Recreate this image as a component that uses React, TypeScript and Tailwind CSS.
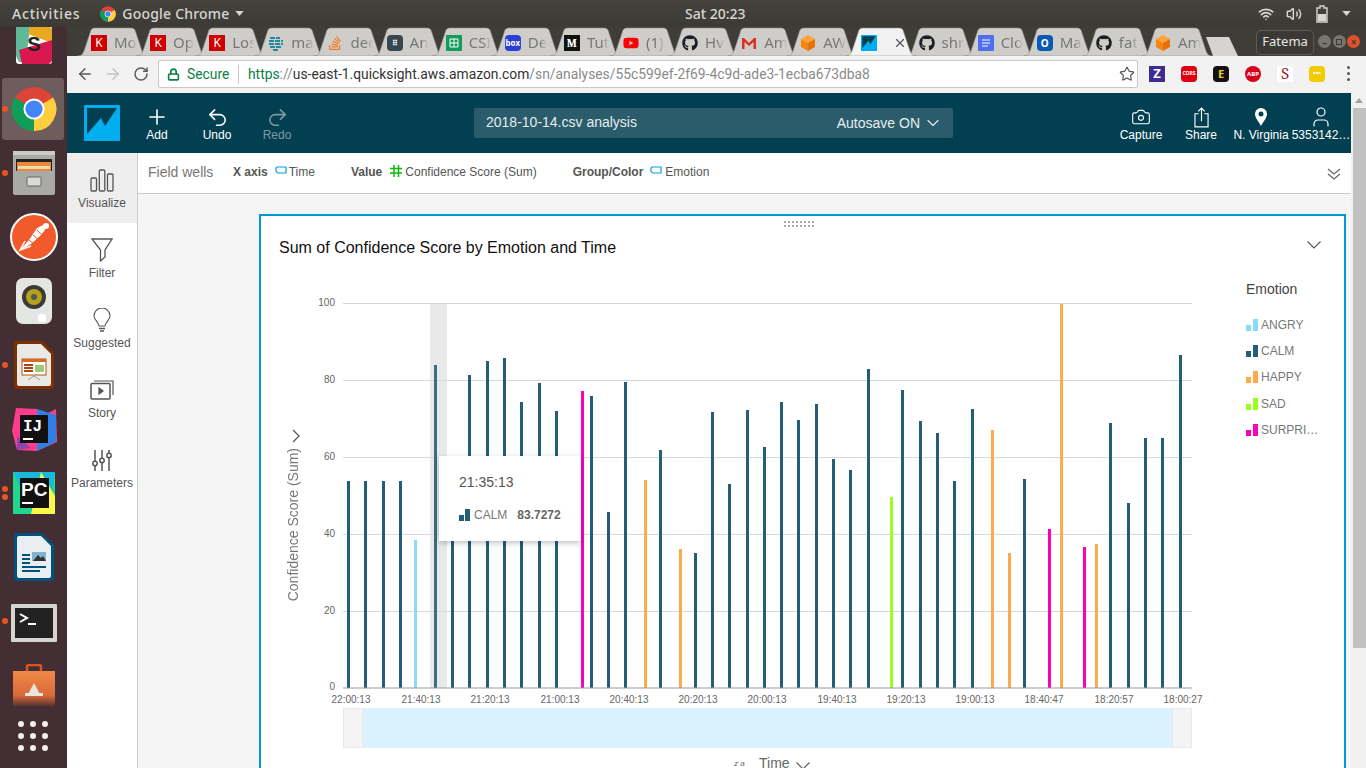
import type { ReactNode } from "react";
import { FaGithub, FaStackOverflow, FaYoutube } from "react-icons/fa";
import { ChevronDown, Wifi, Volume2, Star, Lock, ArrowLeft, ArrowRight, RotateCw, X, Plus, Undo2, Redo2, Camera, User } from "lucide-react";

const NAVY = "#235d78";
const ORANGE = "#ffa94d";
const PINK = "#ff00b4";
const LIME = "#9aff1f";
const SKY = "#8adcf5";

// [left x, top y, colour], page coordinates
const bars: [number, number, string][] = [
  [347, 481, NAVY], [364, 481, NAVY], [382, 481, NAVY], [399, 481, NAVY], [414, 540, SKY],
  [434, 365, "#3b6d84"], [451, 500, NAVY], [468, 375, NAVY], [486, 361, NAVY], [503, 358, NAVY],
  [520, 402, NAVY], [538, 383, NAVY], [555, 411, NAVY], [581, 391, PINK], [590, 396, NAVY],
  [607, 512, NAVY], [624, 382, NAVY], [644, 480, ORANGE], [659, 450, NAVY], [679, 549, ORANGE],
  [694, 553, NAVY], [711, 412, NAVY], [728, 484, NAVY], [746, 410, NAVY], [763, 447, NAVY],
  [780, 402, NAVY], [797, 420, NAVY], [815, 404, NAVY], [832, 459, NAVY], [849, 470, NAVY],
  [867, 369, NAVY], [890, 497, LIME], [901, 390, NAVY], [919, 421, NAVY], [936, 433, NAVY],
  [953, 481, NAVY], [971, 409, NAVY], [991, 430, ORANGE], [1008, 553, ORANGE], [1023, 479, NAVY],
  [1048, 529, PINK], [1060, 304, ORANGE], [1083, 547, PINK], [1095, 544, ORANGE], [1109, 423, NAVY],
  [1127, 503, NAVY], [1144, 438, NAVY], [1161, 438, NAVY], [1179, 355, NAVY],
];

const yTicks: [string, number][] = [["100", 303], ["80", 380], ["60", 457], ["40", 534], ["20", 611]];
const xLabels: [string, number][] = [
  ["22:00:13", 351], ["21:40:13", 421], ["21:20:13", 490], ["21:00:13", 560], ["20:40:13", 629],
  ["20:20:13", 698], ["20:00:13", 767], ["19:40:13", 837], ["19:20:13", 906], ["19:00:13", 975],
  ["18:40:47", 1044], ["18:20:57", 1114], ["18:00:27", 1183],
];

const legend: [string, string][] = [["ANGRY", SKY], ["CALM", NAVY], ["HAPPY", ORANGE], ["SAD", LIME], ["SURPRI…", PINK]];

function Keras() {
  return <span className="flex h-4 w-4 items-center justify-center bg-[#d00000] text-[12px] leading-none text-white">K</span>;
}

function AwsCube() {
  return (
    <svg viewBox="0 0 16 16" className="h-4 w-4">
      <path d="M8 0 15 4 8 8 1 4z" fill="#ffa23a" />
      <path d="M1 4 8 8V16L1 12z" fill="#f58510" />
      <path d="M15 4 8 8V16L15 12z" fill="#e8710a" />
    </svg>
  );
}

function QsLogo({ size }: { size: string }) {
  return (
    <svg viewBox="0 0 36 36" className={size}>
      <rect width="36" height="36" rx="1" fill="#00aeef" />
      <path d="M3 3H33L21 21 17 13 3 29z" fill="#023f50" />
    </svg>
  );
}

function Github() {
  return <FaGithub className="h-4 w-4 text-[#1b1f23]" />;
}

const tabs: [ReactNode, string][] = [
  [<Keras />, "Mo"],
  [<Keras />, "Op"],
  [<Keras />, "Los"],
  [<svg viewBox="0 0 16 16" className="h-4 w-4"><path d="M2 3h10M1 6h14M1 9h14M2 12h12M5 15h6" stroke="#1f8a9e" strokeWidth="2" strokeDasharray="5 1" /></svg>, "ma"],
  [<FaStackOverflow className="h-4 w-4 text-[#f48024]" />, "dee"],
  [<span className="flex h-4 w-4 items-center justify-center rounded-sm bg-[#37474f] text-[8px] font-bold leading-none text-white">⠿</span>, "An"],
  [<svg viewBox="0 0 16 16" className="h-4 w-4"><rect width="16" height="16" rx="1" fill="#0f9d58" /><path d="M4 4h8v8H4zM4 8h8M8 4v8" stroke="#fff" fill="none" /></svg>, "CSI"],
  [<span className="flex h-4 w-4 items-center justify-center rounded-sm bg-[#2a3fd6] text-[8px] font-bold leading-none text-white">box</span>, "De"],
  [<span className="flex h-4 w-4 items-center justify-center bg-[#111] font-serif text-[12px] font-bold leading-none text-white">M</span>, "Tut"],
  [<FaYoutube className="h-4 w-4 text-[#f00]" />, "(1)"],
  [<Github />, "Hv"],
  [<svg viewBox="0 0 16 16" className="h-4 w-4"><path d="M1 3V14H3.500V7L8 11 12.500 7V14H15V3H13L8 8 3 3z" fill="#d93025" /></svg>, "Am"],
  [<AwsCube />, "AW"],
];

const tabsAfter: [ReactNode, string][] = [
  [<Github />, "shr"],
  [<svg viewBox="0 0 16 16" className="h-4 w-4"><rect width="16" height="16" rx="1" fill="#4f6ef2" /><path d="M4 5h8M4 8h8M4 11h6" stroke="#fff" /></svg>, "Clo"],
  [<span className="flex h-4 w-4 items-center justify-center rounded-sm bg-[#0a5ab5] text-[10px] font-bold leading-none text-white">O</span>, "Ma"],
  [<Github />, "fat"],
  [<AwsCube />, "Am"],
];

function TabShape({ active }: { active?: boolean }) {
  return (
    <svg viewBox="0 0 72 29" className="absolute inset-0 h-full w-full">
      <path
        d="M0.500 29 C5 29 6 27 8 21 L13 6 C14 2 15 1 19 1 H53 C57 1 58 2 59 6 L64 21 C66 27 67 29 71.500 29z"
        fill={active ? "#f2f2f2" : "#cfcdc9"}
        stroke="#8f8d88"
        strokeWidth="0.6"
      />
    </svg>
  );
}

function Tab({ icon, label }: { icon: ReactNode; label: string }) {
  return (
    <div className="relative -mr-[12.900px] h-[29px] w-[72px] shrink-0">
      <TabShape />
      <div className="relative flex h-full items-center gap-[7px] pl-[14px] pr-[12px] pt-[2px]">
        <span className="shrink-0">{icon}</span>
        <span className="overflow-hidden whitespace-nowrap text-[15px] text-[#777] [mask-image:linear-gradient(to_right,black_65%,transparent)]">{label}</span>
      </div>
    </div>
  );
}

function TopBar() {
  return (
    <div className="flex h-[27px] shrink-0 items-center justify-between bg-gradient-to-b from-[#45433d] to-[#3c3a35] pr-[15px] pl-[12px] font-['Noto_Sans',sans-serif] text-[14px] font-medium text-[#d8d6d0]">
      <div className="flex items-center">
        <span className="tracking-[0.8px]">Activities</span>
        <svg viewBox="0 0 48 48" className="ml-[20px] h-[16px] w-[16px]">
          <circle cx="24" cy="24" r="23" fill="#db4437" />
          <path d="M24 24 44 12A23 23 0 0 1 24 47z" fill="#ffcd40" />
          <path d="M24 24 24 47A23 23 0 0 1 4 12z" fill="#0f9d58" />
          <circle cx="24" cy="24" r="10" fill="#fff" />
          <circle cx="24" cy="24" r="8" fill="#4285f4" />
        </svg>
        <span className="ml-[6px] tracking-[0.2px]">Google Chrome</span>
        <svg viewBox="0 0 10 6" className="ml-[5px] h-[5px] w-[9px]"><path d="M0 0H10L5 6z" fill="#d8d6d0" /></svg>
      </div>
      <span className="absolute left-[685px]">Sat 20:23</span>
      <div className="flex items-center">
        <Wifi size={16} strokeWidth={2.4} />
        <Volume2 size={16} strokeWidth={2.2} className="ml-[12px]" />
        <svg viewBox="0 0 12 18" className="ml-[14px] h-[18px] w-[12px]"><path d="M4 1H8V3H11V17H1V3H4z" fill="none" stroke="#d8d6d0" strokeWidth="1.400" /><rect x="2" y="9" width="8" height="7" fill="#d8d6d0" /></svg>
        <svg viewBox="0 0 10 6" className="ml-[14px] h-[5px] w-[9px]"><path d="M0 0H10L5 6z" fill="#d8d6d0" /></svg>
      </div>
    </div>
  );
}

function TabStrip() {
  return (
    <div className="flex h-[29px] shrink-0 items-center bg-[#3f3d38] pl-[10px] font-['Noto_Sans',sans-serif]">
      {tabs.map(([icon, label], i) => (
        <Tab key={i} icon={icon} label={label} />
      ))}
      <div className="relative z-10 -mr-[12.900px] h-[29px] w-[72px] shrink-0">
        <TabShape active />
        <div className="relative flex h-full items-center pl-[16px] pt-[2px]">
          <QsLogo size="h-4 w-4" />
          <X size={14} className="ml-[16px] text-[#555]" />
        </div>
      </div>
      {tabsAfter.map(([icon, label], i) => (
        <Tab key={i} icon={icon} label={label} />
      ))}
      <svg viewBox="0 0 34 20" className="ml-[5px] mt-[8px] h-[20px] w-[34px] shrink-0">
        <path d="M1 1H24L33 20H8z" fill="#d6d4d0" />
      </svg>
      <div className="ml-[17px] mt-[1px] flex h-[25px] w-[58px] shrink-0 items-center justify-center rounded-[5px] border border-[#5d5b55] bg-[#3b3935] text-[13px] text-[#e8e6e1]">Fatema</div>
      <div className="ml-[4px] flex items-center gap-[1.500px]">
        <span className="flex h-[13px] w-[13px] items-center justify-center rounded-full bg-[#77756f] text-[10px] font-bold leading-none text-[#3b3935]">–</span>
        <span className="flex h-[13px] w-[13px] items-center justify-center rounded-full bg-[#77756f]"><span className="h-[6px] w-[6px] border border-[#3b3935]" /></span>
        <span className="flex h-[13px] w-[13px] items-center justify-center rounded-full bg-[#e2502b] text-[10px] font-bold leading-none text-[#3b3935]">×</span>
      </div>
    </div>
  );
}

function ExtIcon({ children, className }: { children?: ReactNode; className: string }) {
  return <span className={`flex h-[16px] w-[16px] shrink-0 items-center justify-center font-bold leading-none ${className}`}>{children}</span>;
}

function Toolbar() {
  return (
    <div className="flex h-[37px] shrink-0 items-center bg-[#f2f2f2] pb-[2px] pl-[9px] font-['Roboto',sans-serif]">
      <ArrowLeft size={18} strokeWidth={2} className="text-[#5a5a5a]" />
      <ArrowRight size={18} strokeWidth={2} className="ml-[10px] text-[#c4c4c4]" />
      <RotateCw size={16} strokeWidth={2.2} className="ml-[11px] text-[#5a5a5a]" />
      <div className="ml-[9px] flex h-[28px] w-[980px] items-center rounded-[2px] border border-[#c8c8c8] bg-white pl-[8px] pt-[1px] text-[13.830px]">
        <Lock size={13} strokeWidth={3} className="text-[#0b8043]" />
        <span className="ml-[7px] w-[43px] whitespace-nowrap text-[#0b8043]">Secure</span>
        <span className="ml-[8px] h-[19px] w-px bg-[#c8c8c8]" />
        <span className="ml-[9px] whitespace-nowrap">
          <span className="text-[#0b8043]">https</span>
          <span className="text-[#8a8a8a]">://</span>
          <span className="text-[#333]">us-east-1.quicksight.aws.amazon.com</span>
          <span className="text-[#8a8a8a]">/sn/analyses/55c599ef-2f69-4c9d-ade3-1ecba673dba8</span>
        </span>
        <Star size={16} strokeWidth={1.8} className="ml-auto mr-[2px] text-[#5a5a5a]" />
      </div>
      <div className="ml-[11px] flex items-center gap-[16px] font-['Noto_Sans',sans-serif] text-[7px]">
        <ExtIcon className="bg-[#3d2b96] text-[13px] text-white">Z</ExtIcon>
        <ExtIcon className="rounded-sm bg-[#e00010] text-[5px] text-white">CORS</ExtIcon>
        <ExtIcon className="rounded-sm bg-[#111] text-[11px] text-[#f0d020]">E</ExtIcon>
        <ExtIcon className="rounded-full bg-[#d8001a] text-[6px] text-white">ABP</ExtIcon>
        <ExtIcon className="bg-white font-serif text-[16px] font-normal text-[#a02030]">S</ExtIcon>
        <ExtIcon className="rounded-sm bg-[#f3cb00] text-[7px] text-white">•••</ExtIcon>
        <div className="ml-[6px] flex flex-col gap-[3px]">
          <span className="h-[3px] w-[3px] rounded-full bg-[#555]" />
          <span className="h-[3px] w-[3px] rounded-full bg-[#555]" />
          <span className="h-[3px] w-[3px] rounded-full bg-[#555]" />
        </div>
      </div>
    </div>
  );
}

function DockItem({ children, dots = 0, active }: { children?: ReactNode; dots?: number; active?: boolean }) {
  return (
    <div className="relative flex h-[64px] w-[67px] shrink-0 items-center justify-center">
      {active && <div className="absolute left-[2px] top-[1px] h-[62px] w-[62px] rounded-[3px] bg-[#6f5c5c]" />}
      {dots > 0 && (
        <div className="absolute left-[2px] top-1/2 flex -translate-y-1/2 flex-col gap-[2px]">
          {Array.from({ length: dots }).map((_, i) => (
            <span key={i} className="h-[6px] w-[6px] rounded-full bg-[#e95420]" />
          ))}
        </div>
      )}
      <div className="relative">{children}</div>
    </div>
  );
}

function Dock() {
  return (
    <div className="flex w-[67px] shrink-0 flex-col overflow-hidden bg-[#432f33]">
      <div className="-mt-[14px] flex flex-col">
        <DockItem>
          <svg viewBox="0 0 36 38" className="h-[38px] w-[36px]">
            <rect width="36" height="38" rx="3" fill="#fff" />
            <path d="M0 0H14L10 36H3L0 30z" fill="#5fb89a" />
            <path d="M14 0H33L36 3V17L12 8z" fill="#e8a820" />
            <path d="M3 24 36 14V35L33 38H6z" fill="#d8184e" />
            <text x="18" y="25" textAnchor="middle" className="font-['Liberation_Sans',sans-serif] text-[20px] font-bold" fill="#222">S</text>
          </svg>
        </DockItem>
        <DockItem dots={1} active>
          <svg viewBox="0 0 48 48" className="h-[46px] w-[46px]">
            <circle cx="24" cy="24" r="23" fill="#db4437" />
            <path d="M24 24 44 12A23 23 0 0 1 24 47z" fill="#ffcd40" />
            <path d="M24 24 24 47A23 23 0 0 1 4 12z" fill="#0f9d58" />
            <circle cx="24" cy="24" r="11" fill="#fff" />
            <circle cx="24" cy="24" r="9" fill="#4285f4" />
          </svg>
        </DockItem>
        <DockItem dots={1}>
          <svg viewBox="0 0 42 44" className="h-[44px] w-[42px]">
            <rect width="42" height="44" rx="2" fill="#a9a9a6" />
            <rect x="0" y="0" width="42" height="4" fill="#c9c9c6" />
            <rect x="3" y="8" width="36" height="12" fill="#222" />
            <rect x="4" y="11" width="34" height="9" fill="#e8883a" />
            <rect x="5" y="15" width="32" height="3" fill="#f3d9a8" />
            <rect x="14" y="26" width="14" height="9" rx="1" fill="#d9d9d6" stroke="#666" />
          </svg>
        </DockItem>
        <DockItem>
          <svg viewBox="0 0 48 48" className="h-[48px] w-[48px]">
            <circle cx="24" cy="24" r="23" fill="#f15a2b" stroke="#fff" strokeWidth="2" />
            <path d="M10 37 19 27 27 15 33 12 35 17 30 23 21 31z" fill="#fff" />
            <path d="M19 27 24 31M23 22 28 26M27 17 31 21" stroke="#f15a2b" />
            <path d="M15 28 10 37 21 33" fill="none" stroke="#fff" strokeWidth="1.500" />
            <circle cx="36" cy="13" r="3" fill="#fff" />
          </svg>
        </DockItem>
        <DockItem>
          <svg viewBox="0 0 36 46" className="h-[46px] w-[36px]">
            <rect width="36" height="46" rx="7" fill="#e4e6e4" />
            <circle cx="18" cy="19" r="12" fill="#3a3a36" />
            <circle cx="18" cy="19" r="8" fill="#b6a21a" />
            <circle cx="18" cy="19" r="3" fill="#555" />
            <rect x="22" y="36" width="8" height="8" rx="2" fill="#fff" />
          </svg>
        </DockItem>
        <DockItem dots={1}>
          <svg viewBox="0 0 40 48" className="h-[48px] w-[40px]">
            <path d="M0 3Q0 0 3 0H28L40 12V45Q40 48 37 48H3Q0 48 0 45z" fill="#7f2e00" />
            <path d="M3 5Q3 3 5 3H27L37 13V43Q37 45 35 45H5Q3 45 3 43z" fill="#e9e9e6" />
            <rect x="8" y="18" width="24" height="16" fill="#fff" stroke="#b4541a" />
            <rect x="8" y="18" width="24" height="3" fill="#d96a24" />
            <path d="M10 24H19M10 27H19M10 30H19" stroke="#a8440f" strokeWidth="2" />
            <rect x="21" y="24" width="9" height="7" fill="#9acb7a" />
            <path d="M14 39 20 35 26 39" fill="none" stroke="#999" />
          </svg>
        </DockItem>
        <DockItem>
          <svg viewBox="0 0 46 46" className="h-[46px] w-[46px]">
            <path d="M5 2 26 3 33 9 45 3 46 36 26 45 6 44 1 25z" fill="#ff3d8c" />
            <path d="M26 3 45 9V36L26 45z" fill="#2f7fe6" />
            <path d="M6 30 20 42 6 44z" fill="#8e44ad" />
            <rect x="9" y="9" width="28" height="28" fill="#111" />
            <rect x="12" y="32" width="10" height="2" fill="#fff" />
            <text x="12" y="25" className="font-['Liberation_Mono',monospace] text-[16px] font-bold" fill="#fff">IJ</text>
          </svg>
        </DockItem>
        <DockItem dots={2}>
          <svg viewBox="0 0 42 42" className="h-[42px] w-[42px]">
            <rect width="42" height="42" fill="#21d789" />
            <path d="M0 0H42L38 30 42 42H20z" fill="#1bb8d8" />
            <path d="M28 0 42 24V42H18z" fill="#fcf84a" />
            <rect x="7" y="6" width="29" height="30" fill="#111" />
            <rect x="9" y="30" width="11" height="2" fill="#fff" />
            <text x="8" y="24" className="font-['Liberation_Sans',sans-serif] text-[19px] font-bold" fill="#fff">PC</text>
          </svg>
        </DockItem>
        <DockItem>
          <svg viewBox="0 0 40 48" className="h-[48px] w-[40px]">
            <path d="M0 3Q0 0 3 0H28L40 12V45Q40 48 37 48H3Q0 48 0 45z" fill="#00517e" />
            <path d="M3 5Q3 3 5 3H27L37 13V43Q37 45 35 45H5Q3 45 3 43z" fill="#e9eef0" />
            <path d="M8 22h8M8 26h8M8 30h8M8 34h24M8 38h18" stroke="#00517e" strokeWidth="2" />
            <rect x="18" y="19" width="14" height="9" fill="#7fb3cf" />
            <path d="M19 28 24 22 27 25 29 23 32 28z" fill="#333" />
          </svg>
        </DockItem>
        <DockItem dots={1}>
          <svg viewBox="0 0 46 38" className="mt-[3px] h-[38px] w-[46px]">
            <rect width="46" height="38" rx="1" fill="#d4d4d0" />
            <rect x="4" y="4" width="38" height="30" fill="#222" />
            <path d="M9 10 16 14 9 18" fill="none" stroke="#fff" strokeWidth="2" />
            <path d="M17 20H25" stroke="#fff" strokeWidth="2" />
          </svg>
        </DockItem>
        <DockItem>
          <svg viewBox="0 0 42 42" className="h-[42px] w-[42px]">
            <defs>
              <linearGradient id="bag" x1="0" y1="0" x2="0" y2="1">
                <stop offset="0" stopColor="#ee8a48" />
                <stop offset="0.7" stopColor="#d9683a" />
                <stop offset="1" stopColor="#55352f" />
              </linearGradient>
            </defs>
            <path d="M0 7H42V42H0z" fill="url(#bag)" />
            <path d="M14 7V3Q14 1 16 1H26Q28 1 28 3V7" fill="none" stroke="#d9541e" strokeWidth="2.500" />
            <path d="M21 19 28 32H14z" fill="#e9e4dc" />
            <path d="M12 29H30V32H12z" fill="#e9e4dc" />
          </svg>
        </DockItem>
        <div className="ml-[18px] mt-[4px] grid w-[30px] grid-cols-3 gap-[6px]">
          {Array.from({ length: 9 }).map((_, i) => (
            <span key={i} className="h-[6px] w-[6px] rounded-full bg-[#f2f0ee]" />
          ))}
        </div>
      </div>
    </div>
  );
}

function HeaderButton({ label, icon, dim, w }: { label: string; icon: ReactNode; dim?: boolean; w: string }) {
  return (
    <div className={`flex flex-col items-center whitespace-nowrap text-[12px] ${w} ${dim ? "text-[#7f9aa3]" : "text-white"}`}>
      <div className="flex h-[26px] items-center">{icon}</div>
      <span className="-mt-[2px] leading-[14px]">{label}</span>
    </div>
  );
}

function Header() {
  return (
    <div className="flex h-[60px] shrink-0 items-center bg-[#023f50] pl-[17px]">
      <QsLogo size="h-[36px] w-[36px] shrink-0" />
      <div className="ml-[7px] flex">
        <HeaderButton w="w-[60px]" label="Add" icon={<Plus size={24} strokeWidth={1.6} />} />
        <HeaderButton w="w-[60px]" label="Undo" icon={<Undo2 size={23} strokeWidth={1.6} />} />
        <HeaderButton w="w-[60px]" dim label="Redo" icon={<Redo2 size={23} strokeWidth={1.6} />} />
      </div>
      <div className="ml-[167px] flex h-[30px] w-[479px] items-center justify-between rounded-[2px] bg-[#2a5c6c] pl-[12px] pr-[10px] text-[14px] text-[#e6edef]">
        <span className="-mt-[2px]">2018-10-14.csv analysis</span>
        <span className="flex items-center gap-[3px]">
          Autosave ON
          <ChevronDown size={20} strokeWidth={1.3} />
        </span>
      </div>
      <div className="ml-auto flex">
        <HeaderButton w="w-[60px]" label="Capture" icon={<Camera size={20} strokeWidth={1.3} />} />
        <HeaderButton w="w-[60px]" label="Share" icon={
          <svg viewBox="0 0 16 22" className="h-[21px] w-[15px]" fill="none" stroke="#fff" strokeWidth="1.200">
            <path d="M5 7H1V21H15V7H11M8 15V1M4.500 4.500 8 1 11.500 4.500" />
          </svg>
        } />
        <HeaderButton w="w-[60px]" label="N. Virginia" icon={
          <svg viewBox="0 0 12 18" className="h-[18px] w-[12px]">
            <path fillRule="evenodd" d="M6 0A6 6 0 0 1 12 6C12 10 8 14 6 18 4 14 0 10 0 6A6 6 0 0 1 6 0zM6 3.500A2.500 2.500 0 1 0 6 8.500 2.500 2.500 0 0 0 6 3.500z" fill="#fff" />
          </svg>
        } />
        <HeaderButton w="w-[60px]" label="5353142…" icon={<User size={24} strokeWidth={1.2} />} />
      </div>
    </div>
  );
}

function SideItem({ label, icon, active }: { label: string; icon: ReactNode; active?: boolean }) {
  return (
    <div className={`flex h-[70px] flex-col items-center whitespace-nowrap pt-[14px] text-[12px] text-[#555] ${active ? "bg-[#eeeeee]" : ""}`}>
      <div className="flex h-[26px] items-center">{icon}</div>
      <span className="mt-[3px] leading-[14px]">{label}</span>
    </div>
  );
}

function SideNav() {
  return (
    <div className="w-[71px] shrink-0 border-r border-[#cccccc] bg-white">
      <SideItem active label="Visualize" icon={
        <svg viewBox="0 0 24 24" className="h-[24px] w-[24px]" fill="none" stroke="#555" strokeWidth="1.300">
          <rect x="1" y="10" width="5.500" height="13" rx="1" />
          <rect x="9.300" y="2" width="5.500" height="21" rx="1" />
          <rect x="17.500" y="6" width="5.500" height="17" rx="1" />
        </svg>
      } />
      <SideItem label="Filter" icon={
        <svg viewBox="0 0 22 24" className="h-[24px] w-[22px]" fill="none" stroke="#555" strokeWidth="1.300">
          <path d="M1 1H21L14 12V19L9.500 23V12z" />
        </svg>
      } />
      <SideItem label="Suggested" icon={
        <svg viewBox="0 0 18 24" className="h-[24px] w-[18px]" fill="none" stroke="#555" strokeWidth="1.100">
          <path d="M6 18C5 13 1 12 1 8A8 8 0 0 1 17 8C17 12 13 13 12 18z" />
          <path d="M6 20.500H12M7 23H11" strokeWidth="1.500" />
        </svg>
      } />
      <SideItem label="Story" icon={
        <svg viewBox="0 0 24 20" className="h-[20px] w-[24px]" fill="none" stroke="#555" strokeWidth="1.200">
          <rect x="1" y="3.500" width="19" height="15.500" rx="1" strokeWidth="1.500" />
          <path d="M4 1H23V15" />
          <path d="M9 8 13 11 9 14z" fill="#555" />
        </svg>
      } />
      <SideItem label="Parameters" icon={
        <svg viewBox="0 0 20 22" className="h-[22px] w-[20px]" fill="none" stroke="#555" strokeWidth="1.500">
          <path d="M3 1V12M3 17V22M10 1V9M10 14V22M17 1V4M17 9V22" />
          <circle cx="3" cy="14.500" r="2.200" />
          <circle cx="10" cy="11.500" r="2.200" />
          <circle cx="17" cy="6.500" r="2.200" />
        </svg>
      } />
    </div>
  );
}

function DimIcon({ className }: { className?: string }) {
  return (
    <svg viewBox="0 0 12 9" className={`h-[9px] w-[12px] ${className ?? ""}`} fill="none" stroke="#00a0e0" strokeWidth="1.200">
      <path d="M2 1H11V7H2.500L1 5V2z" />
    </svg>
  );
}

function FieldWells() {
  return (
    <div className="flex h-[41px] shrink-0 items-center border-b border-[#cccccc] bg-white pb-[2px] pl-[10px] pr-[10px] text-[12px] text-[#555]">
      <span className="w-[85px] text-[14px] text-[#777]">Field wells</span>
      <span className="font-bold">X axis</span>
      <DimIcon className="ml-[7px] -mt-[3px]" />
      <span className="ml-[2px]">Time</span>
      <span className="ml-[36px] font-bold">Value</span>
      <svg viewBox="0 0 12 12" className="ml-[8px] -mt-[2px] h-[12px] w-[12px]" fill="none" stroke="#0cb80c" strokeWidth="1.500">
        <path d="M4 0V12M8.500 0V12M0 3.500H12M0 8H12" />
      </svg>
      <span className="ml-[3px]">Confidence Score (Sum)</span>
      <span className="ml-[36px] font-bold">Group/Color</span>
      <DimIcon className="ml-[7px] -mt-[3px]" />
      <span className="ml-[3px]">Emotion</span>
      <svg viewBox="0 0 14 12" className="ml-auto mt-[3px] h-[12px] w-[14px]" fill="none" stroke="#666" strokeWidth="1.200">
        <path d="M1 1 7 6 13 1M1 6 7 11 13 6" />
      </svg>
    </div>
  );
}

function Chart() {
  return (
    <svg viewBox="311 295 895 410" className="h-[410px] w-[895px] shrink-0 font-['Liberation_Sans',sans-serif]">
      <rect x="430" y="303" width="17" height="385" fill="#e9e9e9" />
      {yTicks.map(([label, y]) => (
        <g key={label}>
          <line x1="343" x2="1192" y1={y + 0.5} y2={y + 0.5} stroke="#d8d8d8" />
          <text x="335" y={y + 3} textAnchor="end" className="text-[10px]" fill="#666">{label}</text>
        </g>
      ))}
      <text x="335" y="690" textAnchor="end" className="text-[10px]" fill="#666">0</text>
      {bars.map(([x, top, color]) => (
        <rect key={x} x={x} y={top} width="3" height={688 - top} fill={color} />
      ))}
      <line x1="343" x2="1192" y1="688" y2="688" stroke="#999" />
      {xLabels.map(([label, x]) => (
        <text key={label} x={x} y="703" textAnchor="middle" className="text-[10px]" fill="#666">{label}</text>
      ))}
    </svg>
  );
}

function LegendItem({ label, color }: { label: string; color: string }) {
  return (
    <div className="flex h-[26.200px] items-center">
      <span className="flex w-[12px] items-end gap-[2px]">
        <span className="h-[6px] w-[5px]" style={{ backgroundColor: color }} />
        <span className="h-[12px] w-[5px]" style={{ backgroundColor: color }} />
      </span>
      <span className="ml-[3px] text-[12px] text-[#777]">{label}</span>
    </div>
  );
}

function Card() {
  return (
    <div className="relative ml-[121px] mt-[20px] h-[640px] w-[1087px] shrink-0 border-2 border-[#0099d8] bg-white font-['Liberation_Sans',sans-serif]">
      <div className="flex h-[13px] justify-center pt-[5px]">
        <div className="ml-[-8px] grid h-[6px] w-[30px] grid-cols-[repeat(8,2px)] gap-x-[2px] gap-y-[2px]">
          {Array.from({ length: 16 }).map((_, i) => (
            <span key={i} className="h-[2px] w-[2px] bg-[#aaaaaa]" />
          ))}
        </div>
      </div>
      <div className="flex h-[36px] items-center justify-between pl-[18px] pr-[23px] pt-[2px]">
        <span className="text-[16px] text-[#111]">Sum of Confidence Score by Emotion and Time</span>
        <svg viewBox="0 0 14 8" className="-mt-[6px] h-[8px] w-[14px]" fill="none" stroke="#555" strokeWidth="1.100">
          <path d="M0.500 0.500 7 7 13.500 0.500" />
        </svg>
      </div>
      <div className="mt-[30px] flex">
        <div className="flex w-[50px] shrink-0 flex-col items-center pl-[13px] pt-[134px]">
          <svg viewBox="0 0 8 14" className="ml-[6px] h-[14px] w-[8px]" fill="none" stroke="#555" strokeWidth="1.200">
            <path d="M1 1 7 7 1 13" />
          </svg>
          <span className="mt-[5px] whitespace-nowrap text-[14px] leading-[16px] text-[#777] [writing-mode:vertical-rl] rotate-180">Confidence Score (Sum)</span>
        </div>
        <Chart />
        <div className="ml-[40px] -mt-[16px]">
          <div className="text-[14px] text-[#444]">Emotion</div>
          <div className="mt-[12px]">
            {legend.map(([label, color]) => (
              <LegendItem key={label} label={label} color={color} />
            ))}
          </div>
        </div>
      </div>
      <div className="ml-[82px] mt-[3px] flex h-[40px] w-[849px]">
        <div className="w-[20px] border border-[#e8e8e8] bg-[#f4f4f4]" />
        <div className="flex-1 bg-[#d9f2fd]" />
        <div className="w-[20px] border border-[#e8e8e8] bg-[#f4f4f4]" />
      </div>
      <div className="ml-[473px] mt-[5px] flex items-center text-[14px] text-[#666]">
        <span className="w-[25px] text-[8px] italic leading-none">z a</span>
        <span>Time</span>
        <svg viewBox="0 0 14 8" className="ml-[6px] mt-[5px] h-[8px] w-[14px]" fill="none" stroke="#555" strokeWidth="1.100">
          <path d="M0.500 0.500 7 7 13.500 0.500" />
        </svg>
      </div>
      {/* hover tooltip */}
      <div className="absolute left-[178px] top-[240px] h-[85px] w-[142px] bg-white px-[20px] pt-[17px] shadow-[0_2px_6px_rgba(0,0,0,0.25)]">
        <div className="text-[14px] leading-[18px] text-[#555]">21:35:13</div>
        <div className="mt-[15px] flex items-center text-[12px]">
          <span className="flex w-[12px] items-end gap-[1px]">
            <span className="h-[6px] w-[5px] bg-[#235d78]" />
            <span className="h-[12px] w-[5px] bg-[#235d78]" />
          </span>
          <span className="ml-[3px] text-[#777]">CALM</span>
          <span className="ml-[10px] font-bold text-[#666]">83.7272</span>
        </div>
      </div>
    </div>
  );
}

function Scrollbar() {
  return (
    <div className="flex w-[15px] shrink-0 flex-col items-center bg-[#f1f1f1]">
      <svg viewBox="0 0 8 5" className="mt-[5px] h-[5px] w-[8px]"><path d="M0 5 4 0 8 5z" fill="#a3a3a3" /></svg>
      <div className="ml-[2px] mt-[5px] h-[540px] w-[13px] bg-[#c1c1c1]" />
    </div>
  );
}

export default function App() {
  return (
    <div className="relative flex h-[768px] w-[1366px] flex-col overflow-hidden bg-white font-['Liberation_Sans',sans-serif]">
      <TopBar />
      <div className="flex min-h-0 flex-1">
        <Dock />
        <div className="flex min-w-0 flex-1 flex-col">
          <TabStrip />
          <Toolbar />
          <div className="flex min-h-0 flex-1">
            <div className="flex min-w-0 flex-1 flex-col">
              <Header />
              <div className="flex min-h-0 flex-1">
                <SideNav />
                <div className="flex min-w-0 flex-1 flex-col overflow-hidden bg-[#f5f5f5]">
                  <FieldWells />
                  <Card />
                </div>
              </div>
            </div>
            <Scrollbar />
          </div>
        </div>
      </div>
    </div>
  );
}
